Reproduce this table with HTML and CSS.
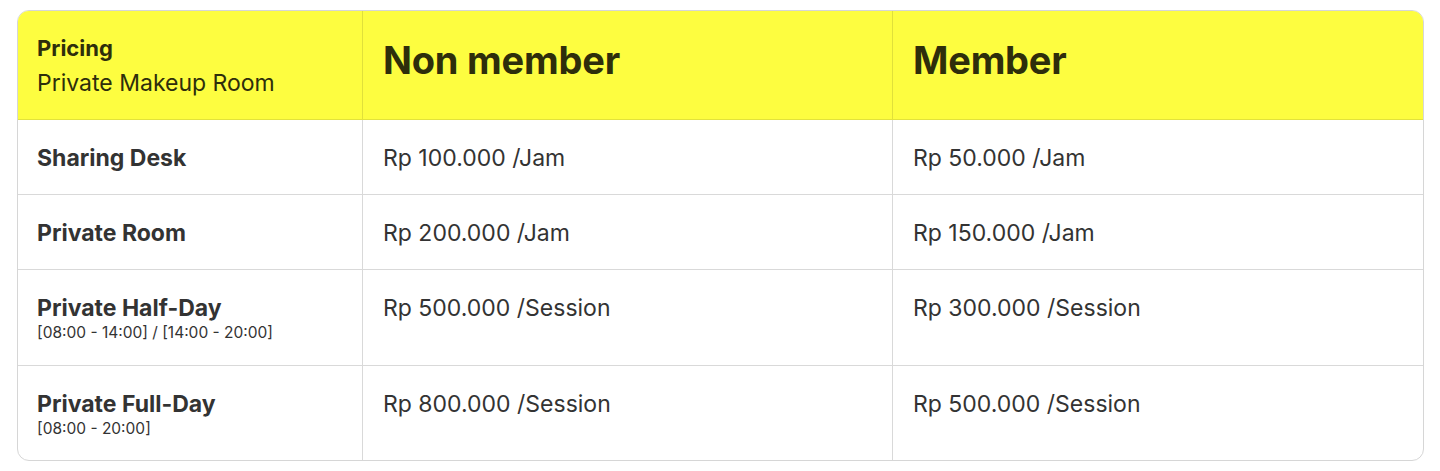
FILE: index.html
```html
<!DOCTYPE html>
<html>
<head>
<meta charset="utf-8">
<link rel="stylesheet" href="styles.css">
</head>
<body>
<div class="wrap">
  <table class="pricing">
    <colgroup>
      <col class="c1"><col class="c2"><col class="c3">
    </colgroup>
    <thead>
      <tr>
        <th class="first">
          <div class="kicker">Pricing</div>
          <div class="title">Private Makeup Room</div>
        </th>
        <th class="big">Non member</th>
        <th class="big">Member</th>
      </tr>
    </thead>
    <tbody>
      <tr>
        <td class="label">Sharing Desk</td>
        <td>Rp 100.000 /Jam</td>
        <td>Rp 50.000 /Jam</td>
      </tr>
      <tr>
        <td class="label">Private Room</td>
        <td>Rp 200.000 /Jam</td>
        <td>Rp 150.000 /Jam</td>
      </tr>
      <tr>
        <td class="label">Private Half-Day<div class="sub">[08:00 - 14:00] / [14:00 - 20:00]</div></td>
        <td>Rp 500.000 /Session</td>
        <td>Rp 300.000 /Session</td>
      </tr>
      <tr>
        <td class="label">Private Full-Day<div class="sub">[08:00 - 20:00]</div></td>
        <td>Rp 800.000 /Session</td>
        <td>Rp 500.000 /Session</td>
      </tr>
    </tbody>
  </table>
</div>
</body>
</html>
```
FILE: styles.css
```css
html, body {
  margin: 0;
  padding: 0;
  background: #ffffff;
}
body {
  font-family: Inter, "Noto Sans", sans-serif;
  color: #333333;
}
.wrap {
  padding: 10px 18px 10px 17px;
}
.pricing {
  width: 100%;
  border-collapse: separate;
  border-spacing: 0;
  border: 1px solid #d6d6d6;
  border-radius: 12px;
  overflow: hidden;
  table-layout: fixed;
}
.c1 { width: 345px; }
.c2 { width: 530px; }
.c3 { width: 530px; }
th, td {
  text-align: left;
  vertical-align: top;
  padding: 24px 20px 22px 20px;
  border-right: 1px solid #d9d9d9;
  border-bottom: 1px solid #d9d9d9;
  font-size: 23px;
  line-height: 28px;
  font-weight: 400;
}
th:first-child, td:first-child { padding-left: 19px; }
th:last-child, td:last-child { border-right: none; }
tbody tr:last-child td { border-bottom: none; padding-bottom: 21px; }
thead th {
  background: #fdfd40;
  color: #2e2e0b;
  border-color: #e0e03a;
  border-bottom-color: #e2e23c;
}
.kicker {
  font-size: 22px;
  font-weight: 700;
  line-height: 26px;
}
.title {
  margin-top: 8px;
  font-size: 23px;
  line-height: 28px;
}
th.big {
  font-size: 38px;
  font-weight: 700;
  line-height: 50px;
  letter-spacing: -0.2px;
}
td.label {
  font-weight: 700;
}
.sub {
  font-size: 15.5px;
  line-height: 21px;
  font-weight: 400;
}
```
